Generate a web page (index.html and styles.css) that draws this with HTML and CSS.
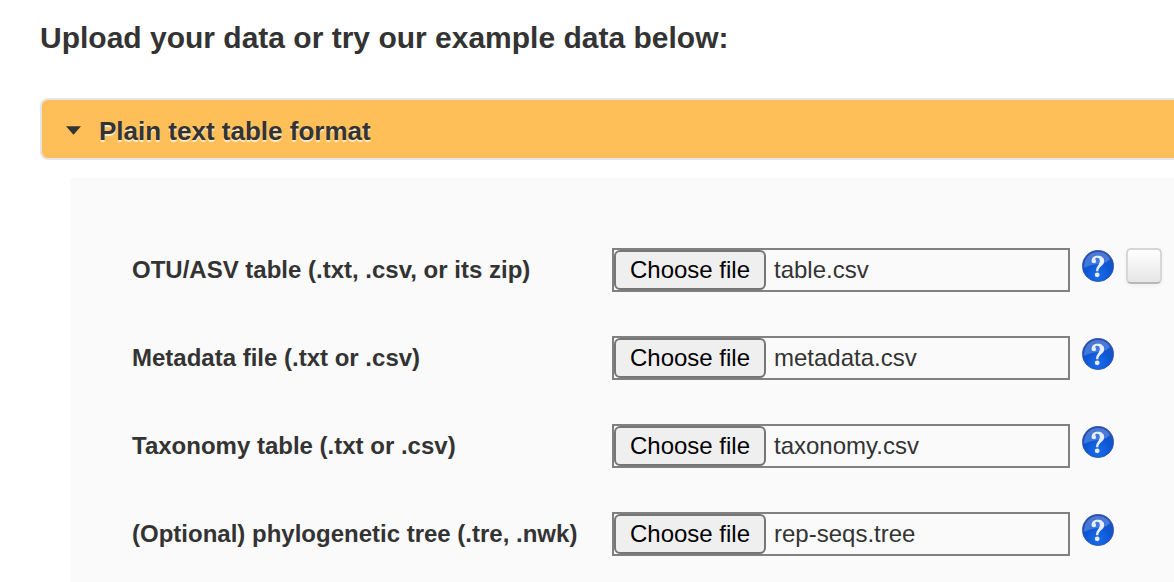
FILE: index.html
```html
<!DOCTYPE html>
<html lang="en">
<head>
<meta charset="utf-8">
<title>Upload data</title>
<link rel="stylesheet" href="styles.css">
</head>
<body>
<svg class="defs" aria-hidden="true">
  <defs>
    <radialGradient id="ball" cx="50%" cy="80%" r="80%">
      <stop offset="0" stop-color="#1a6cea"/>
      <stop offset="0.55" stop-color="#0d55d2"/>
      <stop offset="1" stop-color="#2a4fae"/>
    </radialGradient>
    <linearGradient id="shine" x1="0" y1="0" x2="0" y2="1">
      <stop offset="0" stop-color="#6d94e0" stop-opacity="0.6"/>
      <stop offset="1" stop-color="#6fa0f4" stop-opacity="0.45"/>
    </linearGradient>
    <symbol id="help" viewBox="0 0 32 32">
      <circle cx="16" cy="16" r="15.700" fill="url(#ball)" stroke="#2b4c9c" stroke-width="0.600"/>
      <path d="M2 18C2 8 8 2 16 2c6 0 10 3 12 7-5 7-15 3-26 9z" fill="url(#shine)"/>
      <path d="M9.600 11.200C9.600 7.600 12.200 5.800 15.700 5.800c4 0 6.500 2 6.500 5.200 0 5-5.600 5.200-5.900 10.200h-2.200c-.3-5.400 3.700-6.200 3.700-10.300 0-2-1-3.100-2.600-3.100-1.200 0-1.900.5-1.900 1.200 0 .8.800 1.200.8 2.300 0 1.200-.9 1.900-2.100 1.900-1.400 0-2.400-.8-2.400-2z" fill="#e6eeff"/>
      <circle cx="15.200" cy="24.800" r="2.400" fill="#e6eeff"/>
    </symbol>
  </defs>
</svg>
<main class="page">
  <h1 class="title">Upload your data or try our example data below:</h1>
  <h2 class="section">
    <button class="section-toggle" type="button" aria-expanded="true" aria-controls="upload">
      <svg class="caret" viewBox="0 0 16 9" aria-hidden="true"><path d="M0 0h16L8 9z"/></svg>
      Plain text table format
    </button>
  </h2>
  <form class="panel" id="upload">
    <div class="row">
      <label class="label" for="otu">OTU/ASV table (.txt, .csv, or its zip)</label>
      <div class="file">
        <button class="choose" type="button" tabindex="-1">Choose file</button>
        <span class="name">table.csv</span>
        <input class="picker" type="file" id="otu">
      </div>
      <button class="help" type="button" aria-label="Help on the OTU/ASV table"><svg viewBox="0 0 32 32"><use href="#help"/></svg></button>
      <input class="check" type="checkbox" aria-label="Table option">
    </div>
    <div class="row">
      <label class="label" for="meta">Metadata file (.txt or .csv)</label>
      <div class="file">
        <button class="choose" type="button" tabindex="-1">Choose file</button>
        <span class="name">metadata.csv</span>
        <input class="picker" type="file" id="meta">
      </div>
      <button class="help" type="button" aria-label="Help on the metadata file"><svg viewBox="0 0 32 32"><use href="#help"/></svg></button>
    </div>
    <div class="row">
      <label class="label" for="taxonomy">Taxonomy table (.txt or .csv)</label>
      <div class="file">
        <button class="choose" type="button" tabindex="-1">Choose file</button>
        <span class="name">taxonomy.csv</span>
        <input class="picker" type="file" id="taxonomy">
      </div>
      <button class="help" type="button" aria-label="Help on the taxonomy table"><svg viewBox="0 0 32 32"><use href="#help"/></svg></button>
    </div>
    <div class="row">
      <label class="label" for="tree">(Optional) phylogenetic tree (.tre, .nwk)</label>
      <div class="file">
        <button class="choose" type="button" tabindex="-1">Choose file</button>
        <span class="name">rep-seqs.tree</span>
        <input class="picker" type="file" id="tree">
      </div>
      <button class="help" type="button" aria-label="Help on the phylogenetic tree"><svg viewBox="0 0 32 32"><use href="#help"/></svg></button>
    </div>
  </form>
</main>
</body>
</html>
```
FILE: styles.css
```css
* {
  box-sizing: border-box;
}

body {
  margin: 0;
  background: #fff;
  color: #333;
  font-family: "Liberation Sans", Arial, sans-serif;
  font-size: 24px;
}

button {
  font: inherit;
  color: inherit;
}

.defs {
  position: absolute;
  width: 0;
  height: 0;
}

.page {
  padding: 20px 0 0 40px;
}

.title {
  margin: 0 0 42px;
  font-size: 30px;
  line-height: 36px;
}

.section {
  margin: 0 0 18px;
  font-size: 26px;
  line-height: 32px;
}

.section-toggle {
  display: flex;
  align-items: center;
  gap: 18px;
  width: 100%;
  padding: 15px 24px 11px;
  border: 2px solid #e5e5e5;
  border-right: 0;
  border-radius: 8px 0 0 8px;
  background: #ffbf58;
  text-align: left;
  text-shadow: 0 2px 1px rgba(255, 255, 255, 0.7);
}

.caret {
  width: 15px;
  height: 9px;
  margin-bottom: 2px;
  fill: #333;
}

.panel {
  display: flex;
  flex-direction: column;
  gap: 44px;
  margin-left: 30px;
  padding: 70px 12px 26px 62px;
  background: #fafafa;
}

.row {
  display: grid;
  grid-template-columns: minmax(0, 468fr) minmax(0, 458fr) 32px 36px;
  column-gap: 12px;
  align-items: start;
}

.label {
  font-weight: bold;
  line-height: 44px;
  white-space: nowrap;
}

.file {
  position: relative;
  display: flex;
  gap: 8px;
  height: 44px;
  border: 2px solid #808080;
  line-height: 36px;
}

.choose {
  width: 152px;
  padding: 0;
  border: 2px solid #767676;
  border-radius: 6px;
  background: #efefef;
  color: #000;
  white-space: nowrap;
}

.name {
  line-height: 40px;
}

.picker {
  position: absolute;
  inset: 0;
  width: 100%;
  opacity: 0;
}

.help {
  width: 32px;
  height: 32px;
  margin-top: 2px;
  padding: 0;
  border: 0;
  background: none;
}

.help svg {
  display: block;
}

.check {
  appearance: none;
  width: 36px;
  height: 36px;
  margin: 0;
  border: 2px solid #d6d6d6;
  border-bottom-color: #b8b8b8;
  border-radius: 5px;
  background: linear-gradient(#fff, #e6e6e6);
  box-shadow: 0 2px 4px rgba(0, 0, 0, 0.05);
}
```
